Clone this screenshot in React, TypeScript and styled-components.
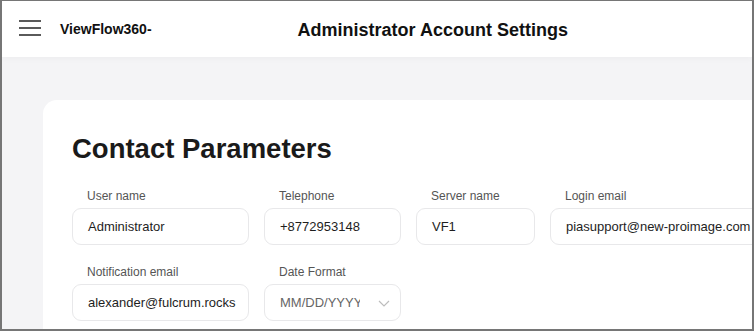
import React from "react";
import styled, { createGlobalStyle } from "styled-components";

const Global = createGlobalStyle`
  html, body { margin: 0; padding: 0; background: #ffffff; }
  body { font-family: "Liberation Sans", Arial, sans-serif; }
  * { box-sizing: border-box; }
`;

const Frame = styled.div`
  width: 754px;
  height: 331px;
  border-style: solid;
  border-color: #767676;
  border-width: 1px 2px 2px 2px;
  display: flex;
  flex-direction: column;
  overflow: hidden;
  background: #fff;
`;

const Header = styled.header`
  height: 56px;
  flex: none;
  display: flex;
  align-items: center;
  padding-left: 15px;
  background: #fff;
  position: relative;
  z-index: 1;
  box-shadow: 0 2px 6px rgba(0, 0, 0, 0.03);
`;

const MenuButton = styled.button`
  border: 0;
  background: none;
  padding: 0;
  width: 24px;
  height: 18px;
  display: flex;
  cursor: pointer;
  margin-top: -2px;
`;

const Brand = styled.div`
  margin-left: 19px;
  font-size: 14px;
  font-weight: 700;
  color: #111;
  margin-top: 0;
`;

const Title = styled.h1`
  margin: 3px 0 0 146px;
  font-size: 18px;
  font-weight: 700;
  color: #111;
`;

const Main = styled.main`
  flex: 1;
  background: #f4f4f6;
  padding: 43px 0 0 41px;
  display: flex;
  min-height: 0;
`;

const Card = styled.section`
  flex: 1;
  background: #fff;
  border-radius: 14px 0 0 0;
  padding: 34px 0 0 29px;
  display: flex;
  flex-direction: column;
`;

const Heading = styled.h2`
  margin: 0;
  font-size: 27.5px;
  line-height: 30px;
  font-weight: 700;
  color: #1a1a1a;
`;

const Rows = styled.div`
  margin-top: 25px;
  display: flex;
  flex-direction: column;
  gap: 20px;
`;

const Row = styled.div`
  display: flex;
  gap: 15px;
`;

const Field = styled.div<{ $w: number }>`
  width: ${(p) => p.$w}px;
  flex: none;
  display: flex;
  flex-direction: column;
  gap: 5px;
`;

const Label = styled.label`
  padding-left: 15px;
  font-size: 12px;
  line-height: 14px;
  color: #555;
`;

const Input = styled.div`
  height: 37px;
  border: 1px solid #e8e8ea;
  border-radius: 9px;
  display: flex;
  align-items: center;
  padding: 0 15px;
  font-size: 13px;
  color: #1e1e1e;
  white-space: nowrap;
  overflow: hidden;
  position: relative;
`;

const Placeholder = styled.span`
  color: #666;
  width: 80px;
  overflow: hidden;
  flex: none;
`;

const Chevron = styled.svg`
  position: absolute;
  right: 10px;
  top: 15px;
`;

const MenuIcon = () => (
  <svg width="24" height="18" viewBox="0 0 24 18">
    <g stroke="#5a5a5a" strokeWidth="2">
      <line x1="2" y1="2" x2="25" y2="2" />
      <line x1="2" y1="9" x2="25" y2="9" />
      <line x1="2" y1="16" x2="25" y2="16" />
    </g>
  </svg>
);

export default function App() {
  return (
    <>
      <Global />
      <Frame>
        <Header>
          <MenuButton aria-label="menu">
            <MenuIcon />
          </MenuButton>
          <Brand>ViewFlow360-</Brand>
          <Title>Administrator Account Settings</Title>
        </Header>
        <Main>
          <Card>
            <Heading>Contact Parameters</Heading>
            <Rows>
              <Row>
                <Field $w={177}>
                  <Label>User name</Label>
                  <Input>Administrator</Input>
                </Field>
                <Field $w={137}>
                  <Label>Telephone</Label>
                  <Input>+8772953148</Input>
                </Field>
                <Field $w={119}>
                  <Label>Server name</Label>
                  <Input>VF1</Input>
                </Field>
                <Field $w={240}>
                  <Label>Login email</Label>
                  <Input>piasupport@new-proimage.com</Input>
                </Field>
              </Row>
              <Row>
                <Field $w={177}>
                  <Label>Notification email</Label>
                  <Input>alexander@fulcrum.rocks</Input>
                </Field>
                <Field $w={137}>
                  <Label>Date Format</Label>
                  <Input>
                    <Placeholder>MM/DD/YYYY</Placeholder>
                    <Chevron width="12" height="7" viewBox="0 0 12 7">
                      <path d="M1 1l5 5 5-5" fill="none" stroke="#bdbdbd" strokeWidth="1.2" />
                    </Chevron>
                  </Input>
                </Field>
              </Row>
            </Rows>
          </Card>
        </Main>
      </Frame>
    </>
  );
}
